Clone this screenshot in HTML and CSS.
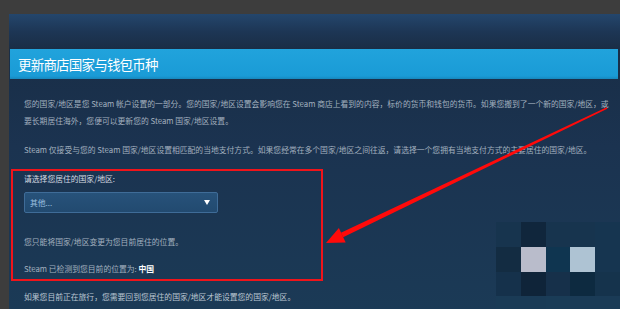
FILE: index.html
```html
<!DOCTYPE html>
<html lang="zh-CN">

<head>
    <meta charset="UTF-8">
    <meta name="viewport" content="width=device-width, initial-scale=1.0">
    <title>更新商店国家与钱包币种</title>
    <link rel="stylesheet" href="styles.css">
</head>

<body>
    <div class="page">
        <div class="dialog">
            <div class="dialog-top"></div>
            <div class="title-bar">更新商店国家与钱包币种</div>
            <div class="content">
                <p class="text first">您的国家/地区是您 Steam 帐户设置的一部分。您的国家/地区设置会影响您在 Steam 商店上看到的内容，标价的货币和钱包的货币。如果您搬到了一个新的国家/地区，或要长期居住海外，您便可以更新您的 Steam 国家/地区设置。</p>
                <p class="text">Steam 仅接受与您的 Steam 国家/地区设置相匹配的当地支付方式。如果您经常在多个国家/地区之间往返，请选择一个您拥有当地支付方式的主要居住的国家/地区。</p>
                <p class="label">请选择您居住的国家/地区:</p>
                <div class="select">
                    <span>其他...</span>
                    <span class="caret"></span>
                </div>
                <p class="text note">您只能将国家/地区变更为您目前居住的位置。</p>
                <p class="text detected">Steam 已检测到您目前的位置为: <b>中国</b></p>
                <p class="text travel">如果您目前正在旅行，您需要回到您居住的国家/地区才能设置您的国家/地区。</p>
            </div>
        </div>
    </div>

    <!-- annotations drawn over the screenshot -->
    <div class="highlight"></div>
    <svg class="arrow" width="620" height="309" viewBox="0 0 620 309">
        <polygon points="606.7,107.3 607.3,108.7 343.1,237.3 340.9,232.7" fill="#ff0a0a" />
        <polygon points="326,243 345.7,242.4 338.9,228" fill="#ff0a0a" />
    </svg>

    <div class="mosaic">
        <span style="background:#17344e"></span>
        <span style="background:#10263c"></span>
        <span style="background:#17344e"></span>
        <span style="background:#17344e"></span>
        <span style="background:#163550"></span>
        <span style="background:#132c42"></span>
        <span style="background:#b9bccb"></span>
        <span style="background:#0f3550"></span>
        <span style="background:#aec3d3"></span>
        <span style="background:#163550"></span>
        <span style="background:#15314b"></span>
        <span style="background:#0f2439"></span>
        <span style="background:#16304a"></span>
        <span style="background:#0d2a40"></span>
        <span style="background:#15334c"></span>
        <span style="background:#1a3b56"></span>
        <span style="background:#1a3b56"></span>
        <span style="background:#1a3c57"></span>
        <span style="background:#1a3b56"></span>
        <span style="background:#1a3b56"></span>
    </div>
</body>

</html>
```

FILE: styles.css
```css
body {
    margin: 0;
    width: 620px;
    height: 309px;
    overflow: hidden;
    background-color: #3d3d3d;
    font-family: "Noto Sans CJK SC", "Liberation Sans", sans-serif;
    position: relative;
}

.page {
    padding-top: 14px;
    padding-left: 9px;
}

.dialog {
    width: 611px;
    height: 295px;
    background: linear-gradient(180deg, #182c44 0%, #1b3350 45%, #1b3a56 100%);
    padding: 0 2px 0 1px;
    box-sizing: border-box;
}

.dialog-top {
    height: 35px;
    background: linear-gradient(180deg, #24466c 0%, #1d3655 50%, #1a2d45 100%);
    margin: 0 -2px 0 -1px;
}

.title-bar {
    height: 30px;
    line-height: 30px;
    padding-left: 8px;
    background: linear-gradient(180deg, #21a3dc 0%, #1a9bd6 90%, #1687bd 100%);
    color: #ffffff;
    font-size: 13.5px;
    letter-spacing: -0.8px;
}

.content {
    padding: 16px 9px 0 14px;
}

p {
    margin: 0;
}

.text {
    font-size: 7.8px;
    line-height: 17px;
    color: #a2b0bf;
}

.text + .text {
    margin-top: 12px;
}

.label {
    margin-top: 12px;
    font-size: 7.8px;
    line-height: 17px;
    color: #d3d9e0;
}

.select {
    margin-top: 5px;
    width: 194px;
    height: 21px;
    box-sizing: border-box;
    border: 1px solid #3f6c98;
    border-radius: 2px;
    background: linear-gradient(180deg, #27527a 0%, #224a70 100%);
    display: flex;
    align-items: center;
    justify-content: space-between;
    padding: 0 7px 0 5px;
    font-size: 7.8px;
    color: #9cc0e0;
}

.caret {
    width: 0;
    height: 0;
    border-left: 3.5px solid transparent;
    border-right: 3.5px solid transparent;
    border-top: 5px solid #ffffff;
}

.text.note {
    margin-top: 20px;
}

.text.detected {
    margin-top: 10px;
}

.detected b {
    color: #ffffff;
    font-weight: bold;
}

.text.travel {
    margin-top: 11px;
    color: #bcc7d3;
}

.highlight {
    position: absolute;
    left: 11px;
    top: 169px;
    width: 308px;
    height: 108px;
    border: 2px solid #f0141a;
}

.arrow {
    position: absolute;
    left: 0;
    top: 0;
    pointer-events: none;
}

.mosaic {
    position: absolute;
    left: 496px;
    top: 222px;
    display: grid;
    grid-template-columns: repeat(5, 24.8px);
    grid-template-rows: 25px 25px 24px 13px;
}
```
